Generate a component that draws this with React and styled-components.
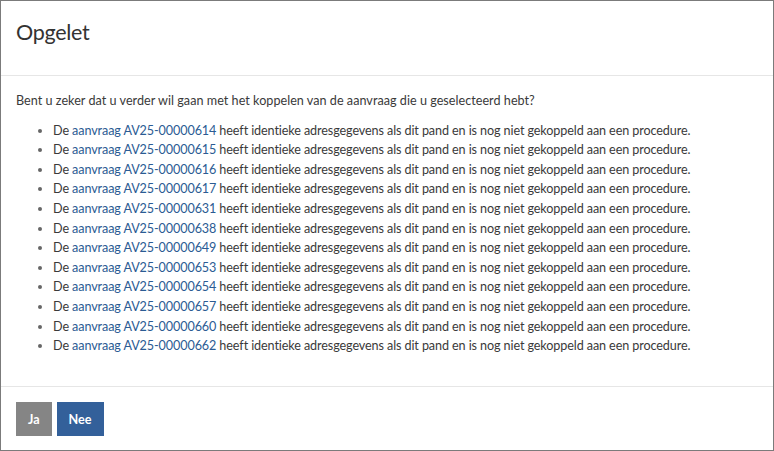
import React from "react";
import styled, { createGlobalStyle } from "styled-components";

const GlobalStyle = createGlobalStyle`
  html, body { margin: 0; padding: 0; background: #fff; }
  * { box-sizing: border-box; }
`;

const Modal = styled.div`
  height: 100vh;
  width: 100vw;
  border: 1px solid #7b7b7b;
  display: flex;
  flex-direction: column;
  font-family: Lato, "Open Sans", sans-serif;
  color: #3a3a3a;
  background: #fff;
`;

const Header = styled.header`
  height: 75px;
  padding: 21px 15px 0;
  border-bottom: 1px solid #e6e6e6;
`;

const Title = styled.h2`
  margin: 0;
  font-size: 21.5px;
  line-height: 21px;
  font-weight: 400;
  letter-spacing: -0.3px;
  color: #333332;
`;

const Body = styled.div`
  flex: 1;
  padding: 15px 15px 0;
  font-size: 12.6px;
  line-height: 19.6px;
`;

const Intro = styled.p`
  margin: 0 0 10px;
  letter-spacing: 0.03px;
`;

const List = styled.ul`
  margin: 0;
  padding-left: 37px;
  list-style: disc;
  letter-spacing: -0.1px;
  li::marker { color: #666; }
`;

const Item = styled.li``;

const Link = styled.a`
  color: #2b5b93;
  text-decoration: none;
`;

const Footer = styled.footer`
  height: 64px;
  border-top: 1px solid #e6e6e6;
  padding: 15px 15px 0;
  display: flex;
  gap: 5px;
  align-items: flex-start;
`;

const Button = styled.button`
  height: 34px;
  padding: 0 12px;
  border: none;
  border-radius: 0;
  font-family: Lato, "Open Sans", sans-serif;
  font-weight: 700;
  font-size: 12.6px;
  color: #fff;
  background: ${(p) => (p.$primary ? "#33609a" : "#858585")};
  cursor: pointer;
`;

const ids = [
  "AV25-00000614",
  "AV25-00000615",
  "AV25-00000616",
  "AV25-00000617",
  "AV25-00000631",
  "AV25-00000638",
  "AV25-00000649",
  "AV25-00000653",
  "AV25-00000654",
  "AV25-00000657",
  "AV25-00000660",
  "AV25-00000662",
];

export default function App() {
  return (
    <>
      <GlobalStyle />
      <Modal>
        <Header>
          <Title>Opgelet</Title>
        </Header>
        <Body>
          <Intro>
            Bent u zeker dat u verder wil gaan met het koppelen van de aanvraag die u geselecteerd hebt?
          </Intro>
          <List>
            {ids.map((id) => (
              <Item key={id}>
                De <Link href="#">aanvraag {id}</Link> heeft identieke adresgegevens als dit pand en is nog niet
                gekoppeld aan een procedure.
              </Item>
            ))}
          </List>
        </Body>
        <Footer>
          <Button>Ja</Button>
          <Button $primary>Nee</Button>
        </Footer>
      </Modal>
    </>
  );
}
